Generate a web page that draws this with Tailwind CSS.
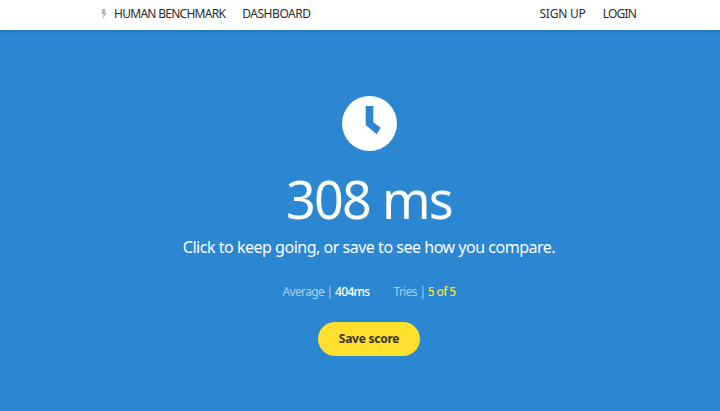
<!DOCTYPE html>
<html lang="en">

<head>
    <meta charset="UTF-8">
    <meta name="viewport" content="width=device-width, initial-scale=1.0">
    <title>Reaction Time</title>
    <script src="https://cdn.jsdelivr.net/npm/@tailwindcss/browser@4"></script>
</head>

<body class="h-[411px] overflow-hidden bg-[#2b87d1] font-['Noto_Sans',sans-serif]">
    <!-- Navigation -->
    <nav class="relative h-[30px] bg-white shadow-[0_1px_4px_rgba(0,0,0,0.2)]">
        <div class="flex h-[27px] items-center justify-between pl-[101px] pr-[84px] text-[12px] tracking-[-0.45px] text-[#2b2b2b]">
            <div class="flex items-center">
                <svg class="mr-[7px] h-[10px] w-[6px]" viewBox="0 0 6 10" aria-hidden="true">
                    <path d="M1 0h3.6L3.7 3.6H6L1.8 10l.8-4.8H1z" fill="#b5b5b5"></path>
                </svg>
                <a href="#" class="tracking-[-0.72px]">HUMAN BENCHMARK</a>
                <a href="#" class="ml-[17px]">DASHBOARD</a>
            </div>
            <div class="flex items-center gap-[17px]">
                <a href="#" class="tracking-[-0.2px]">SIGN UP</a>
                <a href="#" class="tracking-[-0.8px]">LOGIN</a>
            </div>
        </div>
    </nav>

    <!-- Result -->
    <main class="flex flex-col items-center pl-[18px] text-white">
        <svg class="mt-[66px] ml-[1px] h-[55px] w-[55px]" viewBox="0 0 55 55" aria-hidden="true">
            <circle cx="27.5" cy="27.5" r="27.5" fill="#fff"></circle>
            <path d="M23.7 10h7.6v16.3l7.4 5.4-4 6.6-11-9.3z" fill="#2b87d1"></path>
        </svg>
        <h1 class="mt-[14px] text-[52px] leading-[68px] tracking-[-1.7px]">308 ms</h1>
        <p class="mt-[2px] text-[16px] leading-[24px] tracking-[-0.48px]">Click to keep going, or save to see how you compare.</p>
        <div class="mt-[24px] flex text-[12px] leading-[18px] tracking-[-0.65px]">
            <div class="text-white/60">Average | <span class="font-medium text-white">404ms</span></div>
            <div class="ml-[24px] text-white/60">Tries | <span class="font-medium text-[#ffe02e]">5 of 5</span></div>
        </div>
        <button class="mt-[21px] h-[34px] w-[102px] rounded-full bg-[#ffe02e] text-[12px] font-bold tracking-[-0.25px] text-[#333]">Save score</button>
    </main>
</body>

</html>
